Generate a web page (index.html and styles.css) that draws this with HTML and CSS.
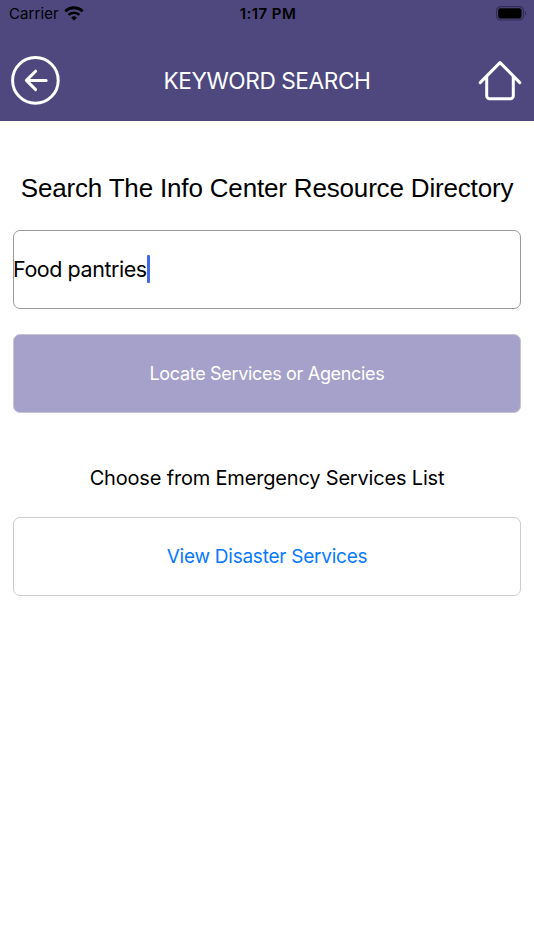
FILE: index.html
```html
<!DOCTYPE html>
<html lang="en">
<head>
    <meta charset="UTF-8">
    <meta name="viewport" content="width=device-width, initial-scale=1.0">
    <title>Keyword Search</title>
    <link rel="stylesheet" href="styles.css">
</head>
<body>
    <header>
        <div class="status-bar">
            <div class="carrier">
                <span class="carrier-name">Carrier</span>
                <svg class="wifi" width="20" height="15" viewBox="0 0 20 15">
                    <path d="M1.3 5.3a12.6 12.6 0 0 1 17.4 0" fill="none" stroke="#000" stroke-width="2.9"/>
                    <path d="M4.5 8.9a8 8 0 0 1 11 0" fill="none" stroke="#000" stroke-width="2.6"/>
                    <path d="M10 14.6l-2.9-2.9a4.2 4.2 0 0 1 5.8 0z"/>
                </svg>
            </div>
            <span class="time">1:17 PM</span>
            <svg class="battery" width="31" height="15" viewBox="0 0 31 15">
                <rect x=".6" y=".6" width="26.8" height="13.4" rx="4" fill="none" stroke="#322d56" stroke-width="1.2"/>
                <rect x="2.2" y="2.2" width="23.4" height="10.2" rx="2.2"/>
                <path d="M28.8 5v4.6c1.9-.8 1.9-3.8 0-4.6z" fill="#322d56"/>
            </svg>
        </div>
        <div class="nav-bar">
            <a class="back" href="#" aria-label="Back">
                <svg width="50" height="50" viewBox="0 0 50 50">
                    <circle cx="25.4" cy="25.4" r="22.8"/>
                    <path d="M36.2 25.4H16.6M25.6 16.2l-9.2 9.2 9.2 9.2"/>
                </svg>
            </a>
            <h1>KEYWORD SEARCH</h1>
            <a class="home" href="#" aria-label="Home">
                <svg width="44" height="42" viewBox="0 0 44 42">
                    <path d="M2.2 23.6L22 3.6l19.8 20M8.7 17.6v19.2a3 3 0 0 0 3 3h20.6a3 3 0 0 0 3-3V17.6"/>
                </svg>
            </a>
        </div>
    </header>
    <main>
        <h2>Search The Info Center Resource Directory</h2>
        <div class="box search-box"><span class="query">Food pantries</span><span class="caret"></span></div>
        <button class="box locate-button" type="button"><span>Locate Services or Agencies</span></button>
        <p class="list-label">Choose from Emergency Services List</p>
        <button class="box disaster-button" type="button"><span>View Disaster Services</span></button>
    </main>
</body>
</html>
```

FILE: styles.css
```css
* { box-sizing: border-box; }
body { margin: 0; background: #fff; color: #000; font-family: Inter, sans-serif; white-space: nowrap; }
header { height: 121px; background: #4e487f; }
h1, h2, p { margin: 0; font-weight: 400; }
svg { display: block; }

.status-bar { display: grid; grid-template-columns: 1fr auto 1fr; align-items: center; height: 27px; padding: 0 7px 0 9px; font-size: 15px; }
.carrier { display: flex; align-items: center; gap: 5px; }
.carrier-name { letter-spacing: 0.1px; }
.time { font-weight: 600; letter-spacing: 0.45px; }
.battery { justify-self: end; }

.nav-bar { display: grid; grid-template-columns: 1fr auto 1fr; align-items: center; height: 106px; padding: 0 12px 0 10px; }
.nav-bar svg { fill: none; stroke: #fff; stroke-width: 3; stroke-linecap: round; stroke-linejoin: round; }
.home { justify-self: end; }
h1 { padding-left: 2px; color: #fff; font-size: 22.7px; letter-spacing: -0.45px; }

main { display: flex; flex-direction: column; align-items: center; padding: 50px 13px 0; }
h2 { font-family: "Liberation Sans", Arial, sans-serif; font-size: 26px; line-height: 34px; letter-spacing: -0.17px; }
.box { display: flex; align-items: center; width: 100%; height: 79px; border: 1px solid #cccccf; border-radius: 7px; background: #fff; }
.search-box { margin-top: 24.5px; border-color: #9a9a9a; font-size: 21.5px; letter-spacing: -0.45px; }
.query { margin-left: -1px; }
.caret { width: 3px; height: 28px; border-radius: 1px; background: #4169e8; }
button { justify-content: center; padding: 0; font-family: inherit; }
.locate-button { margin-top: 25.5px; background: #a5a1ca; border-color: #c5c4cf; color: #fff; font-size: 18px; letter-spacing: -0.32px; }
.list-label { margin-top: 50px; font-size: 20px; line-height: 30px; letter-spacing: -0.18px; }
.disaster-button { margin-top: 24px; color: #087aff; font-size: 19px; letter-spacing: -0.24px; }
```
